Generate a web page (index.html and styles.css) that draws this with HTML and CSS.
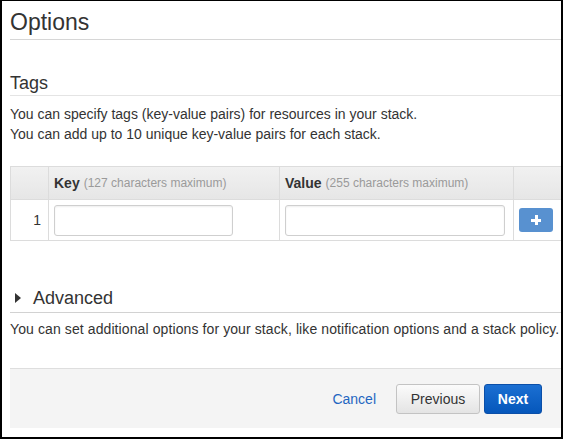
FILE: index.html
```html
<!DOCTYPE html>
<html>
<head>
<meta charset="utf-8">
<link rel="stylesheet" href="styles.css">
</head>
<body>
<div class="frame">
  <h1 class="page-title">Options</h1>

  <h2 class="section-title">Tags</h2>
  <p class="desc desc-tags">You can specify tags (key-value pairs) for resources in your stack.<br>You can add up to 10 unique key-value pairs for each stack.</p>

  <div class="kv">
    <div class="cell head"></div>
    <div class="cell head"><b>Key</b> <span class="hint">(127 characters maximum)</span></div>
    <div class="cell head"><b>Value</b> <span class="hint">(255 characters maximum)</span></div>
    <div class="cell head"></div>

    <div class="cell num">1</div>
    <div class="cell"><input class="field field-key" type="text"></div>
    <div class="cell"><input class="field field-value" type="text"></div>
    <div class="cell"><button class="add-btn" type="button"><span class="plus"></span></button></div>
  </div>

  <h2 class="section-title advanced"><span class="caret"></span>Advanced</h2>
  <p class="desc desc-adv">You can set additional options for your stack, like notification options and a stack policy.</p>

  <div class="footer">
    <a class="cancel" href="#">Cancel</a>
    <button class="btn btn-prev" type="button">Previous</button>
    <button class="btn btn-next" type="button">Next</button>
  </div>
</div>
</body>
</html>
```

FILE: styles.css
```css
* { box-sizing: border-box; }

html, body {
  margin: 0;
  padding: 0;
  background: #fff;
}

body {
  font-family: "Liberation Sans", Arial, Helvetica, sans-serif;
  color: #333;
}

.frame {
  width: 563px;
  height: 439px;
  border-top: 1px solid #000;
  border-left: 2px solid #000;
  border-right: 2px solid #000;
  border-bottom: 2px solid #000;
  overflow: hidden;
  background: #fff;
}

.page-title {
  margin: 8px 0 0 8px;
  padding: 0 0 4px 0;
  font-size: 23px;
  line-height: 26px;
  font-weight: normal;
  color: #333;
  border-bottom: 1px solid #d6d6d6;
}

.section-title {
  margin: 32px 0 0 8px;
  padding: 0 0 1px 0;
  font-size: 18px;
  line-height: 22px;
  font-weight: normal;
  color: #333;
  border-bottom: 1px solid #e4e4e4;
}

.desc {
  margin: 0 0 0 8px;
  font-size: 14px;
  line-height: 20px;
  color: #333;
}

.desc-tags { margin-top: 8px; }

.kv {
  display: grid;
  grid-template-columns: 38px 231px 234px 80px;
  margin: 22px 0 0 8px;
  width: 584px;
  border-top: 1px solid #dcdcdc;
  border-left: 1px solid #dcdcdc;
}

.cell {
  border-right: 1px solid #dcdcdc;
  border-bottom: 1px solid #dcdcdc;
  padding: 0 5px;
  display: flex;
  align-items: center;
  height: 41px;
}

.cell.head {
  height: 33px;
  background: linear-gradient(#f1f1f1, #e6e6e6);
  font-size: 14px;
  line-height: 16px;
  white-space: nowrap;
}

.cell.head b {
  font-weight: bold;
  color: #333;
  margin-right: 4px;
}

.hint {
  font-size: 12px;
  color: #9a9a9a;
}

.cell.num {
  justify-content: flex-end;
  padding-right: 7px;
  font-size: 14px;
  color: #333;
}

.field {
  height: 31px;
  border: 1px solid #cfcfcf;
  border-radius: 3px;
  background: #fff;
  box-shadow: inset 0 1px 2px rgba(0, 0, 0, 0.07);
  padding: 0 6px;
  font-size: 14px;
  margin: 0;
  outline: none;
}

.field-key { width: 179px; }
.field-value { width: 220px; }

.add-btn {
  width: 34px;
  height: 24px;
  border: 0;
  border-radius: 3px;
  background: #5891d0;
  padding: 0;
  margin: 0;
  display: flex;
  align-items: center;
  justify-content: center;
}

.plus {
  position: relative;
  width: 10px;
  height: 10px;
  display: block;
}

.plus::before,
.plus::after {
  content: "";
  position: absolute;
  background: #fff;
}

.plus::before {
  left: 0;
  top: 3.5px;
  width: 10px;
  height: 3px;
}

.plus::after {
  left: 3.5px;
  top: 0;
  width: 3px;
  height: 10px;
}

.advanced {
  margin-top: 46px;
  padding-bottom: 3px;
  border-bottom-color: #d2d2d2;
  display: flex;
  align-items: center;
}

.caret {
  display: inline-block;
  width: 0;
  height: 0;
  border-top: 5px solid transparent;
  border-bottom: 5px solid transparent;
  border-left: 6px solid #333;
  margin: 0 12px 0 5px;
}

.desc-adv {
  margin-top: 6px;
  letter-spacing: 0.1px;
}

.footer {
  margin: 29px 0 0 8px;
  height: 60px;
  border-top: 1px solid #dedede;
  background: #f4f4f4;
  display: flex;
  align-items: center;
  justify-content: flex-end;
  padding-right: 19px;
}

.cancel {
  font-size: 14px;
  color: #1f66c1;
  text-decoration: none;
  margin-right: 20px;
}

.btn {
  height: 30px;
  border-radius: 3px;
  font-family: "Liberation Sans", Arial, Helvetica, sans-serif;
  font-size: 14px;
  padding: 0;
  margin: 0;
}

.btn-prev {
  width: 84px;
  border: 1px solid #c3c3c3;
  background: linear-gradient(#fbfbfb, #e4e4e4);
  color: #333;
}

.btn-next {
  width: 58px;
  margin-left: 4px;
  border: 1px solid #0b4fa8;
  background: linear-gradient(#1b6fd2, #0557bb);
  color: #fff;
  font-weight: bold;
}
```
